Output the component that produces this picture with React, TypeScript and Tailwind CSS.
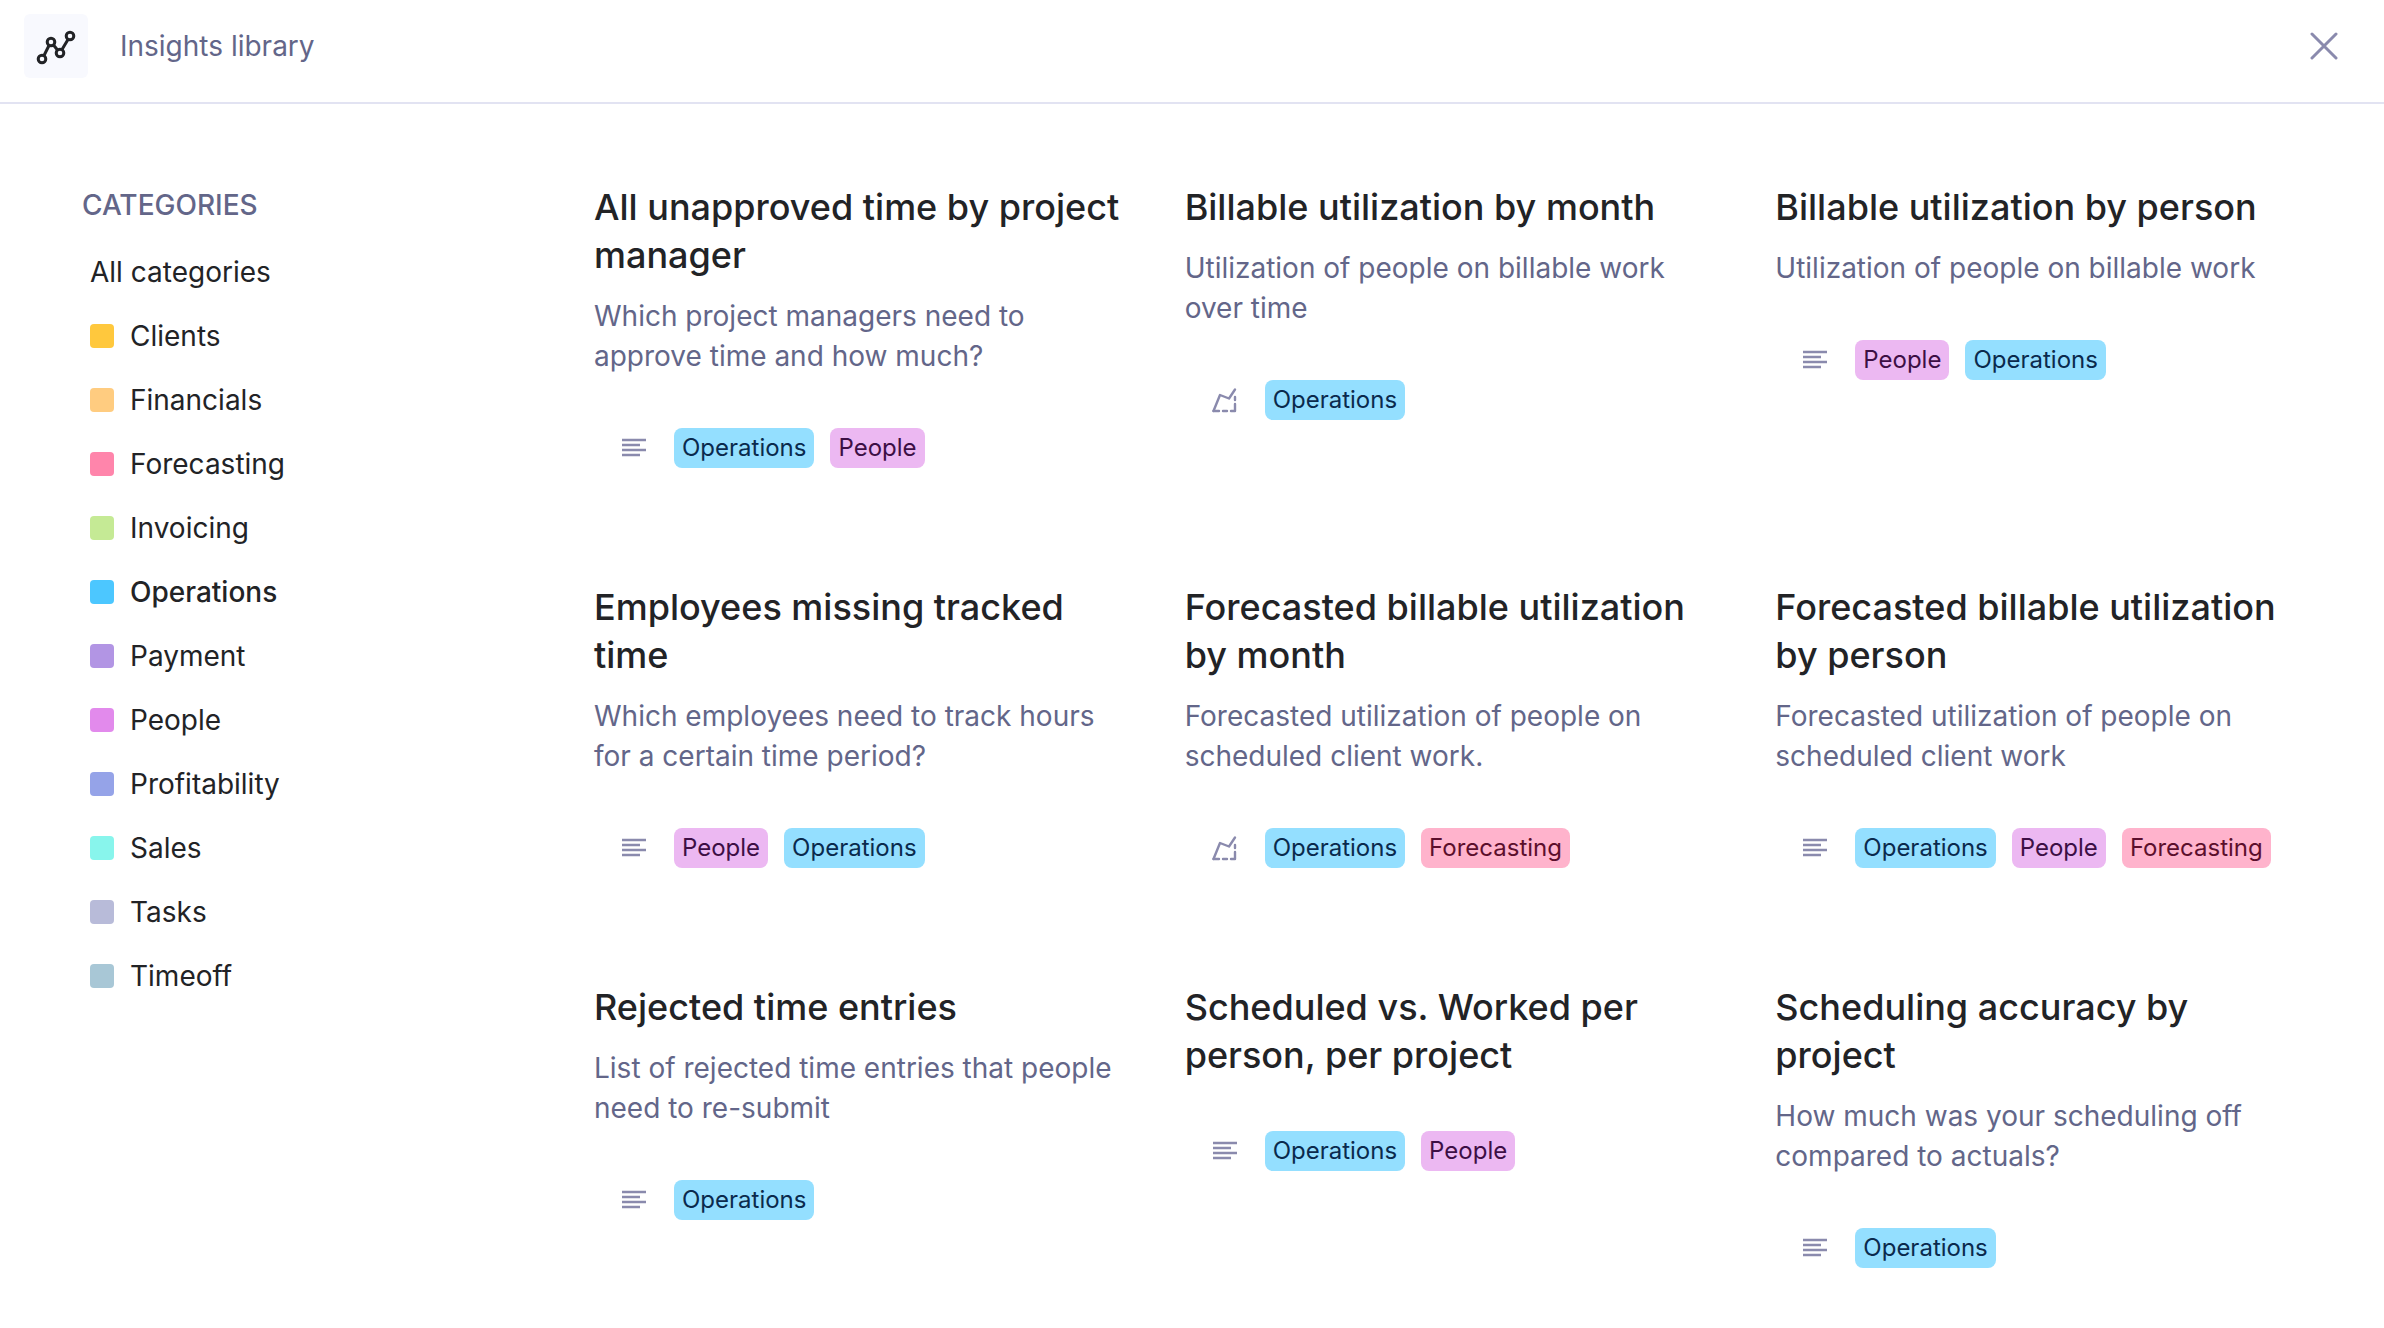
const categories = [
  { name: 'Clients', swatch: 'bg-[#ffc83d]' },
  { name: 'Financials', swatch: 'bg-[#ffcc80]' },
  { name: 'Forecasting', swatch: 'bg-[#ff85ab]' },
  { name: 'Invoicing', swatch: 'bg-[#c5ea95]' },
  { name: 'Operations', swatch: 'bg-[#4cc7ff]', active: true },
  { name: 'Payment', swatch: 'bg-[#b295e4]' },
  { name: 'People', swatch: 'bg-[#e28aec]' },
  { name: 'Profitability', swatch: 'bg-[#95a3e8]' },
  { name: 'Sales', swatch: 'bg-[#88f5ec]' },
  { name: 'Tasks', swatch: 'bg-[#b8bbd9]' },
  { name: 'Timeoff', swatch: 'bg-[#a8c7d6]' },
];

const tagStyles: Record<string, string> = {
  Operations: 'bg-[#94dfff] text-[#0a2a4d]',
  People: 'bg-[#ecb8f2] text-[#3d0f45]',
  Forecasting: 'bg-[#ffb3cc] text-[#5c0f2c]',
};

const insights = [
  { title: 'All unapproved time by project manager', desc: 'Which project managers need to approve time and how much?', icon: 'table', tags: ['Operations', 'People'] },
  { title: 'Billable utilization by month', desc: 'Utilization of people on billable work over time', icon: 'chart', tags: ['Operations'] },
  { title: 'Billable utilization by person', desc: 'Utilization of people on billable work', icon: 'table', tags: ['People', 'Operations'] },
  { title: 'Employees missing tracked time', desc: 'Which employees need to track hours for a certain time period?', icon: 'table', tags: ['People', 'Operations'] },
  { title: 'Forecasted billable utilization by month', desc: 'Forecasted utilization of people on scheduled client work.', icon: 'chart', tags: ['Operations', 'Forecasting'] },
  { title: 'Forecasted billable utilization by person', desc: 'Forecasted utilization of people on scheduled client work', icon: 'table', tags: ['Operations', 'People', 'Forecasting'] },
  { title: 'Rejected time entries', desc: 'List of rejected time entries that people need to re-submit', icon: 'table', tags: ['Operations'] },
  { title: 'Scheduled vs. Worked per person, per project', desc: '', icon: 'table', tags: ['Operations', 'People'] },
  { title: 'Scheduling accuracy by project', desc: 'How much was your scheduling off compared to actuals?', icon: 'table', tags: ['Operations'] },
];

function LinesIcon() {
  return (
    <svg width="28" height="24" viewBox="0 0 28 24" fill="none" stroke="#8a8aad" strokeWidth="2.4">
      <path d="M2 4h24M2 9h18M2 14h24M2 19h18" />
    </svg>
  );
}

function ChartIcon() {
  return (
    <svg width="28" height="28" viewBox="0 0 28 28" fill="none" stroke="#8a8aad" strokeWidth="2.4" strokeLinecap="round" strokeLinejoin="round">
      <path d="M2.5 25 L9 9 L18 12.5 L24 3.5" />
      <path d="M24 11v3M24 18v7h-4M16 25h-4M8 25H2.5" />
    </svg>
  );
}

function LogoIcon() {
  return (
    <svg width="40" height="40" viewBox="0 0 40 40" fill="none" stroke="#222326" strokeWidth="3">
      <circle cx="6" cy="33" r="3.8" />
      <circle cx="15" cy="16" r="3.8" />
      <circle cx="24" cy="27" r="3.8" />
      <circle cx="34" cy="10" r="3.8" />
      <path d="M8 29.5 L13 19.5 M17.5 19 L21.5 24 M26 23.5 L32 13.5" />
    </svg>
  );
}

export default function App() {
  return (
    <div className="h-[1328px] w-[2384px] overflow-hidden bg-white font-['Inter',sans-serif] text-[#222326]">
      <header className="flex h-[104px] items-center justify-between border-b-2 border-[#e2e3f2] pl-6 pr-[46px] pb-[10px]">
        <div className="flex items-center gap-8">
          <div className="flex h-16 w-16 items-center justify-center rounded-md bg-[#f8f9fe]">
            <LogoIcon />
          </div>
          <span className="text-[28px] text-[#636689]">Insights library</span>
        </div>
        <svg width="28" height="28" viewBox="0 0 28 28" fill="none" stroke="#8a8aad" strokeWidth="3" strokeLinecap="round">
          <path d="M2 2 L26 26 M26 2 L2 26" />
        </svg>
      </header>

      <div className="flex pl-[82px] pt-[79px]">
        <aside className="w-[512px] shrink-0">
          <h2 className="text-[28px] font-medium leading-[44px] text-[#636689]">CATEGORIES</h2>
          <ul className="mt-[13px] pl-[8px] text-[28px]">
            <li className="flex h-16 items-center">All categories</li>
            {categories.map((c) => (
              <li key={c.name} className={`flex h-16 items-center gap-4 ${c.active ? 'font-medium' : ''}`}>
                <span className={`h-6 w-6 rounded-[4px] ${c.swatch}`} />
                {c.name}
              </li>
            ))}
          </ul>
        </aside>

        <main className="grid w-[1772px] grid-cols-3 auto-rows-[400px]">
          {insights.map((item) => (
            <article key={item.title} className="pr-[55px]">
              <h3 className="text-[36px] font-medium leading-[48px]">{item.title}</h3>
              {item.desc && <p className="mt-[17px] text-[28px] leading-[40px] text-[#636689]">{item.desc}</p>}
              <div className="mt-[52px] flex h-10 items-center gap-4">
                <div className="flex w-[64px] justify-end pr-[10px]">
                  {item.icon === 'table' ? <LinesIcon /> : <ChartIcon />}
                </div>
                {item.tags.map((tag) => (
                  <span key={tag} className={`rounded-lg px-2 text-[24px] leading-10 ${tagStyles[tag]}`}>
                    {tag}
                  </span>
                ))}
              </div>
            </article>
          ))}
        </main>
      </div>
    </div>
  );
}
